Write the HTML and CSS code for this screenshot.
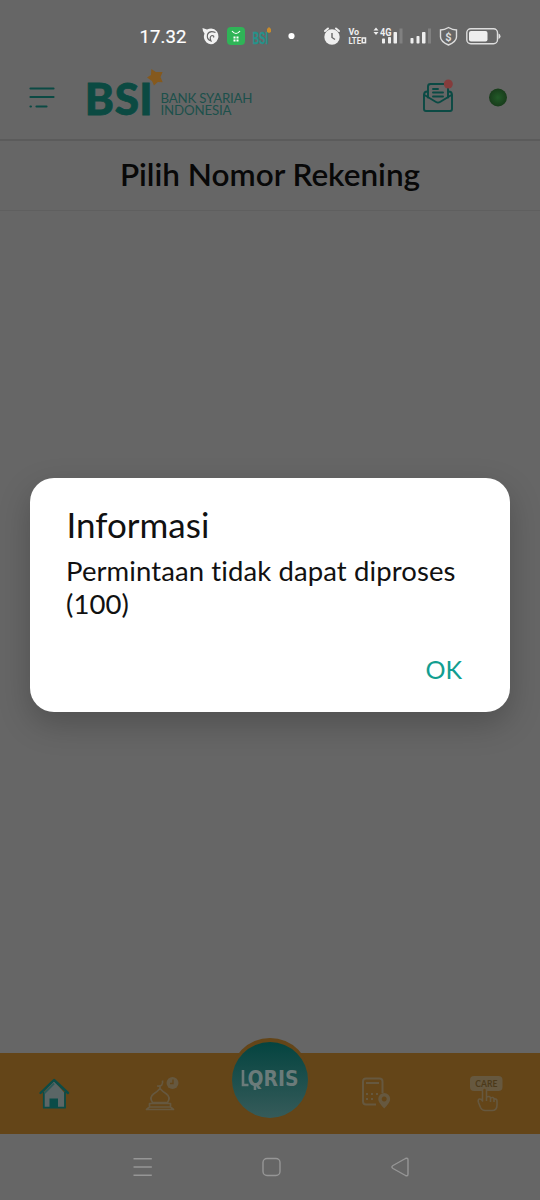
FILE: index.html
```html
<!DOCTYPE html>
<html lang="id">
<head>
    <meta charset="UTF-8">
    <meta name="viewport" content="width=device-width, initial-scale=1.0">
    <title>Pilih Nomor Rekening</title>
    <link rel="stylesheet" href="styles.css">
</head>
<body>
    <div class="screen">
        <div class="status-bar">
            <svg width="540" height="60" viewBox="0 0 540 60">
                <text class="clock" x="139.500" y="43" textLength="47">17.32</text>
                <!-- notifications -->
                <path fill="#f2f2f2" d="M202.500 28l4.500 1.500q6-3 10 2q3 5-.5 10q-5 5-10 1q-4-4-2-9q-2-2-2-5.500z"/>
                <path fill="none" stroke="#666" stroke-width="1.200" d="M215.500 32.500q-6-2.500-8 2q-1 5 3.500 6.500q-2-4.500 1-5.500q2.500 0 1.500 2"/>
                <rect x="227" y="27" width="18" height="18" rx="4" fill="#2fb457"/>
                <path fill="none" stroke="#fff" stroke-width="1.200" d="M232 31q4 5 8 0"/>
                <g fill="#fff"><rect x="233.500" y="36.500" width="2" height="2"/><rect x="236.500" y="36.500" width="2" height="2"/><rect x="233.500" y="39.500" width="2" height="2"/><rect x="236.500" y="39.500" width="2" height="2"/></g>
                <text class="mini-bsi" x="252.500" y="44" textLength="15.500" lengthAdjust="spacingAndGlyphs">BSI</text>
                <path fill="#c98b2b" d="M267 29l2-2 2 2v3l-2 1-2-1z"/>
                <circle cx="291.500" cy="36" r="3.100" fill="#fff"/>
                <!-- alarm -->
                <circle cx="332" cy="37" r="7.700" fill="#eee"/>
                <path fill="none" stroke="#eee" stroke-width="2" stroke-linecap="round" d="M325 31l3-2.500M339 31l-3-2.500"/>
                <path fill="none" stroke="#666" stroke-width="1.400" d="M332 33v4.500l3 2"/>
                <text class="volte" x="348.500" y="34.800" textLength="10.500">Vo</text>
                <text class="volte" x="348.500" y="43.500" textLength="12.500" lengthAdjust="spacingAndGlyphs">LTE</text>
                <rect x="362.200" y="38" width="3.300" height="4.700" fill="none" stroke="#eee" stroke-width="1.500"/>
                <!-- signal -->
                <path fill="#eee" d="M373.500 30.500l2.500-3 2.500 3zM373.500 32l2.500 3 2.500-3z"/>
                <text class="net" x="380" y="35.500" textLength="11.500" lengthAdjust="spacingAndGlyphs">4G</text>
                <g fill="#eee">
                    <rect x="382" y="38.500" width="3" height="5" rx=".7"/><rect x="388" y="37" width="3" height="6.500" rx=".7"/><rect x="393.500" y="32" width="3.500" height="11.500" rx=".7"/>
                    <rect x="410.500" y="38" width="3" height="5.500" rx=".7"/><rect x="416.500" y="36" width="3" height="7.500" rx=".7"/><rect x="422" y="32" width="3.500" height="11.500" rx=".7"/>
                </g>
                <rect x="399.500" y="28.500" width="3" height="15" fill="#808080"/>
                <rect x="428" y="28.500" width="3" height="15" fill="#808080"/>
                <path fill="none" stroke="#ddd" stroke-width="1.400" d="M448.500 27.500q4 2.500 8 2.500v7q0 4.500-8 8q-8-3.500-8-8v-7q4 0 8-2.500z"/>
                <text class="dollar" x="448.500" y="40.500" text-anchor="middle">$</text>
                <rect x="466.800" y="28.800" width="30.700" height="15" rx="4" fill="none" stroke="#ddd" stroke-width="1.400"/>
                <rect x="469" y="31" width="18.500" height="10.500" rx="2" fill="#eee"/>
                <path fill="#ddd" d="M498.500 33.500q2 .5 2 2.800t-2 2.800z"/>
            </svg>
        </div>

        <header class="app-bar">
            <svg width="540" height="79" viewBox="0 60 540 79">
                <defs>
                    <radialGradient id="online">
                        <stop offset="0" stop-color="#225a28"/>
                        <stop offset="1" stop-color="#183c1b"/>
                    </radialGradient>
                </defs>
                <path class="teal-line" stroke-width="2.200" d="M30.500 88.500h23M30.500 97h23M30.500 106.500h.4M36.500 106.500h10"/>
                <text class="logo" x="84.700 114.800 139.300" y="114.500">BSI</text>
                <path fill="#85591d" d="M151.300 69L155.800 72 162.600 72 160.500 77 162.700 82.300 157.800 82 154 85.500 152 81 147 77.500 151 75z"/>
                <text class="logo-name" x="160.500" y="102.500" textLength="92">BANK SYARIAH</text>
                <text class="logo-name" x="160.500" y="115.200" textLength="71">INDONESIA</text>
                <!-- inbox -->
                <g class="teal-line" stroke-width="1.900">
                    <path d="M428 97.500v-11q0-2.500 2.500-2.500h15q2.500 0 2.500 2.500v11"/>
                    <path d="M427.500 91.500q-3.500 0-3.500 3.500v14q0 2 2 2h24q2 0 2-2v-14q0-3.500-3.500-3.500"/>
                    <path d="M424.500 95l11.500 7q2 1.200 4 0l11.500-7"/>
                    <path d="M433 89h5M433 92.500h10M433 96.500h10"/>
                </g>
                <circle cx="448.300" cy="84" r="4.500" fill="#853c3c"/>
                <circle cx="498" cy="97.500" r="9" fill="url(#online)"/>
            </svg>
        </header>

        <h1 class="page-title">Pilih Nomor Rekening</h1>

        <main class="content">
            <section class="dialog">
                <h2>Informasi</h2>
                <p>Permintaan tidak dapat diproses (100)</p>
                <button class="ok-btn">OK</button>
            </section>
        </main>

        <nav class="tab-bar">
            <svg width="540" height="98" viewBox="0 1036 540 98">
                <defs>
                    <linearGradient id="qris-bg" x1="0" y1="0" x2="0" y2="1">
                        <stop offset="0" stop-color="#044440"/>
                        <stop offset="1" stop-color="#365b5a"/>
                    </linearGradient>
                </defs>
                <rect x="0" y="1053" width="540" height="81" fill="#644518"/>
                <circle cx="270" cy="1078" r="40" fill="#644518"/>
                <circle cx="270" cy="1080" r="38" fill="url(#qris-bg)"/>
                <!-- scan frame beside the QRIS name -->
                <path fill="none" stroke="#6b7b7a" stroke-width="2.600" d="M243 1070v15h5.500M255 1085v5"/>
                <text class="qris" x="247.500" y="1085.500" textLength="51" lengthAdjust="spacingAndGlyphs">QRIS</text>
                <!-- home -->
                <path fill="#5b6666" d="M43.500 1093v14.500h21V1093L54 1081z"/>
                <path fill="none" stroke="#0b4c48" stroke-width="1.800" stroke-linejoin="round" d="M43.800 1092v15.700h21.200V1092"/>
                <path fill="none" stroke="#0b4c48" stroke-width="2.400" stroke-linejoin="round" stroke-linecap="round" d="M40.500 1093L54 1080l14 13"/>
                <path fill="none" stroke="#2b5a58" stroke-width="2" d="M44.500 1093l9.500-9.500"/>
                <rect x="49.500" y="1098.500" width="8.500" height="9" fill="#0b4c48"/>
                <!-- prayer times -->
                <g fill="none" stroke="#66583f" stroke-width="1.700" stroke-linejoin="round">
                    <path d="M152.500 1102.500q-3.500-5 1-8.500 4-2.500 6.500-5.500 2.500 3 6.500 5.500 4.500 3.500 1 8.500zM149.500 1103.500h21v3.500h-21zM146.500 1109.500h27l-3-2.500h-21z"/>
                    <path d="M160 1089v-3M157 1086q6.500 1 5.500-5.500"/>
                </g>
                <circle cx="172.500" cy="1083" r="6" fill="#66583f"/>
                <path d="M173 1079.500v4h-3" fill="none" stroke="#644518" stroke-width="1.300"/>
                <!-- branch and atm -->
                <path fill="none" stroke="#66583f" stroke-width="2" d="M376 1104.500h-10q-3 0-3-3v-20q0-3 3-3h13.500q3 0 3 3V1093M366 1083h13"/>
                <path fill="none" stroke="#66583f" stroke-width="2" stroke-dasharray="2 3" d="M366 1094h13M366 1099h9"/>
                <path fill="#66583f" fill-rule="evenodd" d="M384.200 1093a6 6 0 0 1 6 6q0 3.500-6 9.500-6-6-6-9.500a6 6 0 0 1 6-6zm0 3.500a2.500 2.500 0 1 0 .01 0z"/>
                <!-- care -->
                <rect x="470" y="1076" width="32.500" height="15" rx="4" fill="#66583f"/>
                <text class="care" x="486.300" y="1086.700" text-anchor="middle" textLength="22">CARE</text>
                <path fill="#644518" stroke="#66583f" stroke-width="1.600" stroke-linejoin="round" d="M482.500 1101v-11q0-2 2-2t2 2v7q3.500-1.500 4 1 3-1.500 3.500 1 3-.5 3 2v4q0 5.500-5 5.500h-7q-3 0-4.500-3l-2-5q-1-3 1-3.500 2-.2 3 2zM486.500 1097v4M490.500 1098v4M494 1099v3"/>
            </svg>
        </nav>

        <div class="system-nav">
            <svg width="540" height="66" viewBox="0 1134 540 66" fill="none" stroke="#969696" stroke-width="1.400">
                <path d="M133.500 1158.700h18.300M133.500 1167h18.300M133.500 1175.200h18.300"/>
                <rect x="263" y="1158.500" width="17" height="17" rx="4"/>
                <path stroke-linejoin="round" d="M393 1165.500l12.500-7q2.500-1 2.500 1.500v14q0 2.500-2.500 1.500l-12.500-7q-2.200-1.500 0-3z"/>
            </svg>
        </div>
    </div>
</body>
</html>
```
FILE: styles.css
```css
body {
    margin: 0;
    font-family: Lato, sans-serif;
    font-variant-ligatures: none;
    background: #666;
}

svg {
    display: block;
}

.screen {
    display: flex;
    flex-direction: column;
    width: 540px;
    height: 1200px;
    overflow: hidden;
    background: #666;
}

.status-bar {
    height: 60px;
}

.clock {
    font: 400 18.500px Roboto, sans-serif;
    fill: #fff;
    stroke: #fff;
    stroke-width: 0.2px;
}

.mini-bsi {
    font: 700 17px "Liberation Sans", sans-serif;
    fill: #25938b;
    stroke: #25938b;
    stroke-width: 0.3px;
}

.volte {
    font: 700 9px Roboto, sans-serif;
    fill: #eee;
}

.net {
    font: 700 10.500px Roboto, sans-serif;
    fill: #eee;
}

.dollar {
    font: 700 11px Roboto, sans-serif;
    fill: #ddd;
}

.app-bar {
    height: 79px;
    border-bottom: 2px solid #5b5b5b;
}

.teal-line {
    fill: none;
    stroke: #0b4a44;
    stroke-linecap: round;
    stroke-linejoin: round;
}

.logo {
    font: 900 44px Lato, sans-serif;
    fill: #0b4a42;
    stroke: #0b4a42;
    stroke-width: 0.8px;
}

.logo-name {
    font: 400 13.300px Lato, sans-serif;
    fill: #1c504b;
}

.page-title {
    box-sizing: border-box;
    height: 70px;
    margin: 0;
    border-bottom: 1px solid #5f5f5f;
    font-size: 31.500px;
    font-weight: 600;
    line-height: 66px;
    text-align: center;
    color: #080808;
}

.content {
    flex: 1;
    padding: 267px 30px 0;
}

.dialog {
    display: flex;
    flex-direction: column;
    box-sizing: border-box;
    height: 233.500px;
    padding: 25px 36px 0;
    border-radius: 24px;
    background: #fff;
    color: #111;
    box-shadow: 0 12px 32px rgba(0, 0, 0, 0.22);
}

.dialog h2 {
    margin: 0 0 0 0.500px;
    font-size: 35px;
    font-weight: 400;
    line-height: 42px;
}

.dialog p {
    margin: 9px -4px 0 0;
    font-size: 27.500px;
    line-height: 33px;
    letter-spacing: 0.1px;
}

.ok-btn {
    align-self: flex-end;
    margin: 33px 12px 0 0;
    padding: 0;
    border: none;
    background: none;
    font: 400 25px/32px Lato, sans-serif;
    color: #129e91;
}

.tab-bar {
    height: 98px;
}

.qris {
    font: 900 20.500px "DejaVu Sans", sans-serif;
    fill: #6b7b7a;
}

.care {
    font: 700 8.500px Lato, sans-serif;
    fill: #4c3a1a;
}

.system-nav {
    height: 66px;
}
```
